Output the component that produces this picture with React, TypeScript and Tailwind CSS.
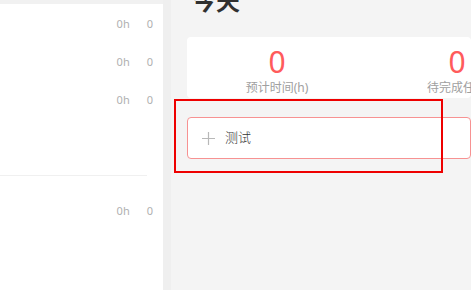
import React from "react";

const font = { fontFamily: '"Noto Sans", "Noto Sans CJK SC", sans-serif' };

const Row = () => (
  <div className="flex h-[38px] items-center justify-end gap-[17px] pr-[10px] text-[11px] text-[#b0b0b0]">
    <span>0h</span>
    <span>0</span>
  </div>
);

const Stat = ({ label }: { label: string }) => (
  <div className="flex w-[180px] shrink-0 flex-col items-center">
    <span className="text-[30px] leading-[34px] text-[#ff5b5b]">0</span>
    <span className="mt-[1px] whitespace-nowrap text-[12px] leading-[16px] text-[#a0a0a0]">{label}</span>
  </div>
);

export default function App() {
  return (
    <div className="relative flex h-[290px] w-[471px] overflow-hidden bg-[#f4f4f4]" style={font}>
      <aside className="flex w-[163px] shrink-0 flex-col bg-white">
        <div className="h-[4px] w-full bg-[#f1f1f1]" />
        <div className="mt-[1px]">
          <Row />
          <Row />
          <Row />
        </div>
        <div className="mt-[56px] h-px w-[147px] bg-[#f0f0f0]" />
        <div className="mt-[16px]">
          <Row />
        </div>
      </aside>
      <div className="w-[8px] shrink-0 bg-[#efefef]" />
      <main className="flex min-w-0 flex-1 flex-col pl-[16px]">
        <h1 className="-mt-[14px] ml-[5px] text-[24px] font-bold leading-[30px] text-[#303030]">今天</h1>
        <div className="mt-[21px] flex h-[61px] rounded-[4px] bg-white pt-[8px]">
          <Stat label="预计时间(h)" />
          <Stat label="待完成任务" />
        </div>
        <div className="mt-[19px] flex h-[42px] items-center rounded-[4px] border border-[#f79292] bg-white pl-[14px]">
          <svg width="13" height="13" viewBox="0 0 13 13" className="text-[#b8b8b8]">
            <path d="M6.5 0v13M0 6.5h13" stroke="currentColor" strokeWidth="1.2" fill="none" />
          </svg>
          <span className="ml-[10px] text-[13px] font-light text-[#333]">测试</span>
        </div>
      </main>
      <div className="absolute left-[174px] top-[99px] h-[74px] w-[269px] border-2 border-[#ee0000]" />
    </div>
  );
}
